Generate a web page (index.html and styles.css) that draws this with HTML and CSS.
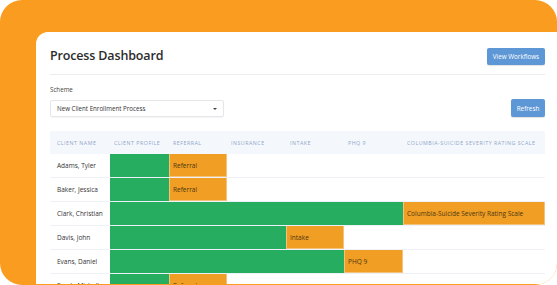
FILE: index.html
```html
<!DOCTYPE html>
<html lang="en">
<head>
<meta charset="utf-8">
<title>Process Dashboard</title>
<link rel="stylesheet" href="styles.css">
</head>
<body>
<div class="frame">
  <div class="card">
    <header class="top">
      <h1 class="title">Process Dashboard</h1>
      <button class="btn btn-wide">View Workflows</button>
    </header>
    <section class="controls">
      <div class="field">
        <div class="label">Scheme</div>
        <div class="select"><span>New Client Enrollment Process</span><span class="caret"></span></div>
      </div>
      <button class="btn btn-refresh">Refresh</button>
    </section>
    <div class="table">
      <div class="row head">
        <div class="cell name">Client Name</div>
        <div class="cell">Client Profile</div>
        <div class="cell">Referral</div>
        <div class="cell">Insurance</div>
        <div class="cell">Intake</div>
        <div class="cell">PHQ 9</div>
        <div class="cell">Columbia-Suicide Severity Rating Scale</div>
      </div>
      <div class="row">
        <div class="cell name">Adams, Tyler</div>
        <div class="bar done span-1"></div>
        <div class="bar todo span-1">Referral</div>
      </div>
      <div class="row">
        <div class="cell name">Baker, Jessica</div>
        <div class="bar done span-1"></div>
        <div class="bar todo span-1">Referral</div>
      </div>
      <div class="row">
        <div class="cell name">Clark, Christian</div>
        <div class="bar done span-5"></div>
        <div class="bar todo span-1">Columbia-Suicide Severity Rating Scale</div>
      </div>
      <div class="row">
        <div class="cell name">Davis, John</div>
        <div class="bar done span-3"></div>
        <div class="bar todo span-1">Intake</div>
      </div>
      <div class="row">
        <div class="cell name">Evans, Daniel</div>
        <div class="bar done span-4"></div>
        <div class="bar todo span-1">PHQ 9</div>
      </div>
      <div class="row">
        <div class="cell name">Frank, Michelle</div>
        <div class="bar done span-1"></div>
        <div class="bar todo span-1">Referral</div>
      </div>
    </div>
  </div>
</div>
</body>
</html>
```

FILE: styles.css
```css
* { box-sizing: border-box; }

html, body {
  margin: 0;
  padding: 0;
  background: #ffffff;
}

body {
  font-family: "Open Sans", "Liberation Sans", sans-serif;
  color: #333333;
}

.frame {
  width: 557px;
  height: 285px;
  background: #f99c1f;
  border-radius: 22px;
  overflow: hidden;
  padding: 32px 0 0 36px;
}

.card {
  width: 523px;
  height: 252px;
  background: #ffffff;
  border-top-left-radius: 12px;
  padding: 14px 14px 0 14px;
  overflow: hidden;
}

.top {
  display: flex;
  justify-content: space-between;
  align-items: center;
  height: 29px;
  padding-bottom: 9px;
  border-bottom: 1px solid #ededed;
}

.title {
  margin: 0;
  font-size: 12.5px;
  line-height: 20px;
  font-weight: 600;
  letter-spacing: -0.15px;
  color: #2b2b2b;
}

.btn {
  border: none;
  border-radius: 2px;
  background: #5d97d5;
  color: #ffffff;
  font-family: "Open Sans", "Liberation Sans", sans-serif;
  font-size: 6.3px;
  height: 18px;
  padding: 0;
  white-space: nowrap;
  text-align: center;
  box-shadow: 0 1px 1px rgba(0, 0, 0, 0.12);
}

.btn-wide {
  width: 58px;
  height: 17px;
  margin-top: 1px;
}

.btn-refresh {
  width: 34px;
}

.controls {
  display: flex;
  justify-content: space-between;
  align-items: flex-end;
  padding-top: 10px;
}

.label {
  font-size: 6.2px;
  line-height: 10px;
  color: #444444;
  margin-bottom: 5px;
}

.select {
  width: 174px;
  height: 17px;
  border: 1px solid #e4e6ea;
  border-radius: 2px;
  display: flex;
  align-items: center;
  justify-content: space-between;
  padding: 0 6px;
  font-size: 6.2px;
  color: #333333;
  box-shadow: 0 1px 1px rgba(0, 0, 0, 0.04);
}

.caret {
  width: 0;
  height: 0;
  border-left: 2px solid transparent;
  border-right: 2px solid transparent;
  border-top: 2.5px solid #444444;
}

.table {
  margin-top: 14px;
  width: 495px;
}

.row {
  display: grid;
  grid-template-columns: 60px 59px 58px 59px 58px 59px 142px;
  height: 24px;
  border-bottom: 1px solid #eef2f8;
}

.row.head {
  height: 23px;
  background: #f4f8fd;
  border-bottom: none;
}

.cell {
  display: flex;
  align-items: center;
  padding-left: 4px;
  font-size: 6.5px;
  white-space: nowrap;
}

.cell.name {
  padding-left: 7px;
  color: #333333;
}

.head .cell {
  font-size: 5.3px;
  letter-spacing: 0.5px;
  text-transform: uppercase;
  color: #92a6c6;
}

.bar {
  display: flex;
  align-items: center;
  padding-left: 3px;
  font-size: 6.5px;
  white-space: nowrap;
  color: #4a3812;
}

.bar.done {
  background: #26ad60;
}

.bar.todo {
  background: #f19e24;
  border: 1px solid #f5c27a;
  border-top: none;
}

.span-1 { grid-column: span 1; }
.span-3 { grid-column: span 3; }
.span-4 { grid-column: span 4; }
.span-5 { grid-column: span 5; }
```
